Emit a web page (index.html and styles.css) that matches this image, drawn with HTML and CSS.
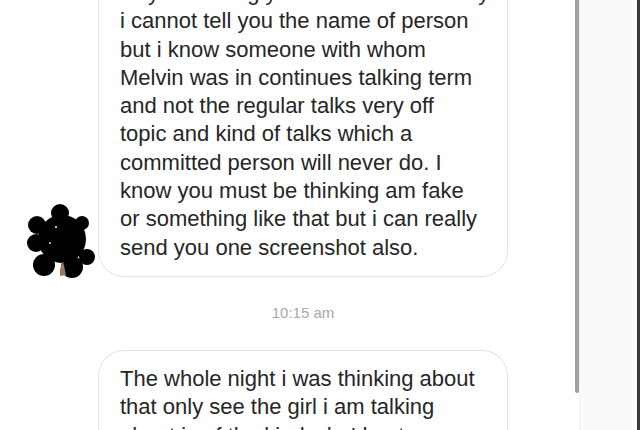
FILE: index.html
```html
<!DOCTYPE html>
<html lang="en">
<head>
  <meta charset="UTF-8">
  <title>Chat</title>
  <link rel="stylesheet" href="styles.css">
</head>
<body>
  <div class="screen">
    <div class="thread">
      <div class="message first">
        <div class="avatar">
          <svg width="72" height="80" viewBox="0 0 72 80">
            <g fill="#000">
              <circle cx="38" cy="38" r="24"/>
              <circle cx="36" cy="12" r="9"/>
              <circle cx="13" cy="24" r="9"/>
              <circle cx="58" cy="22" r="7"/>
              <circle cx="63" cy="56" r="8"/>
              <circle cx="20" cy="64" r="11"/>
              <circle cx="48" cy="66" r="11"/>
              <circle cx="12" cy="42" r="9"/>
            </g>
            <circle cx="32" cy="26" r="1" fill="#fff"/>
            <circle cx="26" cy="42" r="1" fill="#ddd"/>
            <path d="M36 68 L39 60 L42 74 L36 75 Z" fill="#9a7a62"/>
          </svg>
        </div>
        <div class="bubble">
          Hey am telling you this because really<br>
          i cannot tell you the name of person<br>
          but i know someone with whom<br>
          Melvin was in continues talking term<br>
          and not the regular talks very off<br>
          topic and kind of talks which a<br>
          committed person will never do. I<br>
          know you must be thinking am fake<br>
          or something like that but i can really<br>
          send you one screenshot also.
        </div>
      </div>

      <div class="time">10:15 am</div>

      <div class="message">
        <div class="avatar"></div>
        <div class="bubble">
          The whole night i was thinking about<br>
          that only see the girl i am talking<br>
          about is of the kind who'd not say
        </div>
      </div>
    </div>

    <div class="scroll">
      <div class="thumb"></div>
    </div>
    <div class="gutter"></div>
    <div class="edge"></div>
  </div>
</body>
</html>
```

FILE: styles.css
```css
body {
  margin: 0;
  background: #fff;
  font-family: "Liberation Sans", Arial, sans-serif;
  overflow: hidden;
}

.screen {
  display: flex;
  height: 430px;
  overflow: hidden;
}

/* Conversation */
.thread {
  width: 575px;
  display: flex;
  flex-direction: column;
}

.message {
  display: flex;
  align-items: flex-end;
}

.message.first {
  margin-top: -36px;
}

.avatar {
  width: 98px;
  flex-shrink: 0;
  display: flex;
  justify-content: flex-start;
}

.avatar svg {
  margin-left: 24px;
  margin-bottom: -4px;
}

.bubble {
  width: 366px;
  padding: 14px 21px 14px 21px;
  border: 1.5px solid #e2e2e2;
  border-radius: 26px;
  color: #262626;
  font-size: 22px;
  line-height: 28.3px;
  white-space: nowrap;
}

.time {
  text-align: center;
  width: 410px;
  margin: 27px 0 29px 98px;
  font-size: 15px;
  color: #a8a8a8;
}

/* Scrollbar + right edge */
.scroll {
  width: 4px;
  background: #fff;
}

.thumb {
  height: 393px;
  background: #a0a0a0;
  border-radius: 0 0 2px 2px;
}

.gutter {
  flex: 1;
  background: #fafafa;
  border-left: 1px solid #f0f0f0;
}

.edge {
  width: 3px;
  background: #3a3a3a;
}
```
